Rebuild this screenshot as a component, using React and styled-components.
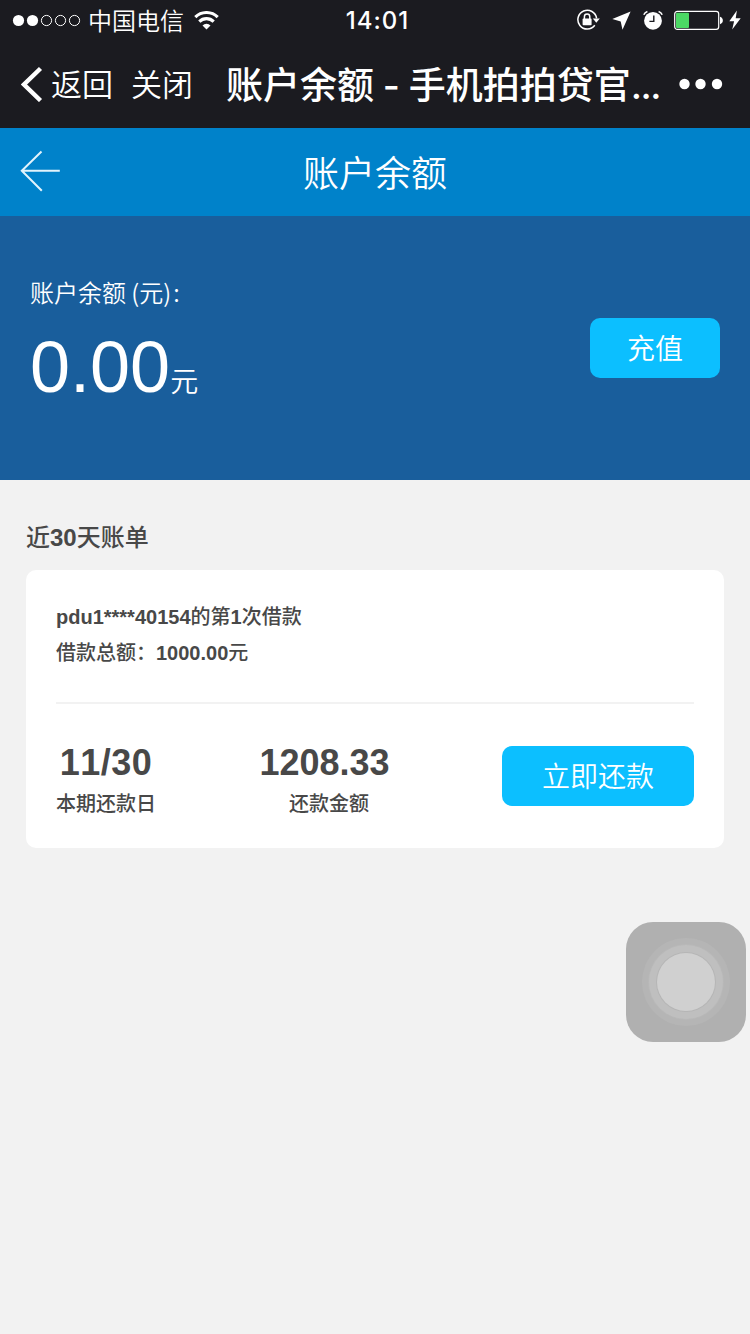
import React from "react";
import styled, { createGlobalStyle } from "styled-components";

const GlobalStyle = createGlobalStyle`
  * {
    box-sizing: border-box;
  }
  body {
    margin: 0;
    background: #f2f2f2;
    color: #484848;
    font-family: "Liberation Sans", "Noto Sans CJK SC", sans-serif;
  }
`;

const Page = styled.div`
  display: flex;
  flex-direction: column;
  width: 750px;
  min-height: 1334px;
  background: #f2f2f2;
`;

// Status bar
const StatusBar = styled.div`
  display: grid;
  grid-template-columns: 1fr auto 1fr;
  align-items: center;
  height: 40px;
  padding: 0 9px 0 12px;
  background: #1b1b20;
  color: #fff;
`;

const StatusLeft = styled.div`
  display: flex;
  align-items: center;
`;

const StatusRight = styled.div`
  display: flex;
  align-items: center;
  justify-content: flex-end;
`;

const Carrier = styled.span`
  margin: 0 10px 0 6px;
  font-family: "Noto Sans CJK SC", sans-serif;
  font-size: 24px;
  font-weight: 350;
  line-height: 40px;
`;

const Clock = styled.span`
  padding: 2px 0 0 2px;
  font-family: Inter, sans-serif;
  font-size: 24px;
  font-weight: 500;
  line-height: 38px;
  letter-spacing: 1px;
`;

const Icon = styled.svg`
  display: block;
  flex: none;
  margin-left: ${props => props.$gap || 0}px;
`;

// Browser navigation
const NavBar = styled.div`
  display: flex;
  align-items: center;
  height: 88px;
  padding: 0 27px 0 21px;
  background: #1b1b20;
  color: #fff;
  font-family: Inter, "Noto Sans CJK SC", sans-serif;
`;

const NavLink = styled.span`
  margin-left: ${props => props.$gap}px;
  padding-top: 2px;
  font-size: 31px;
  font-weight: 350;
  line-height: 86px;
  white-space: nowrap;
`;

const NavTitle = styled.span`
  flex: 1;
  margin-left: 33px;
  padding-top: 4px;
  font-size: 37px;
  font-weight: 500;
  line-height: 84px;
  white-space: nowrap;
  word-spacing: -1px;
`;

const Ellipsis = styled.span`
  letter-spacing: -1.5px;
`;

// Page header
const Header = styled.header`
  display: grid;
  grid-template-columns: 40px 1fr 40px;
  align-items: center;
  height: 88px;
  padding: 0 20px;
  background: #0082ca;
`;

const HeaderTitle = styled.h1`
  margin: 0;
  padding-bottom: 2px;
  color: #fff;
  font-family: "Noto Sans CJK SC", sans-serif;
  font-size: 36px;
  font-weight: 350;
  line-height: 86px;
  text-align: center;
`;

const Balance = styled.section`
  display: flex;
  align-items: center;
  justify-content: space-between;
  height: 264px;
  padding: 0 30px;
  background: #195e9c;
  color: #fff;
`;

const BalanceInfo = styled.div`
  padding-bottom: 12px;
`;

const BalanceLabel = styled.div`
  padding-bottom: 2px;
  font-family: "Noto Sans CJK SC", sans-serif;
  font-size: 24px;
  font-weight: 350;
  line-height: 34px;
`;

const Colon = styled.span`
  margin-left: 2px;
`;

const BalanceAmount = styled.div`
  display: flex;
  align-items: baseline;
  height: 84px;
  margin-top: 14px;
  font-size: 72px;
  line-height: 84px;
`;

const BalanceUnit = styled.span`
  font-family: "Noto Sans CJK SC", sans-serif;
  font-size: 28px;
  font-weight: 350;
`;

const Button = styled.button`
  width: ${props => props.$width}px;
  height: 60px;
  padding: 0 0 2px;
  border: 0;
  border-radius: 10px;
  background: #0cbfff;
  color: #fff;
  font-family: "Noto Sans CJK SC", sans-serif;
  font-size: 28px;
  font-weight: 350;
  line-height: 58px;
`;

// Bills
const Bills = styled.section`
  padding: 40px 26px;
`;

const BillsTitle = styled.h2`
  margin: 0 0 14px;
  font-size: 24px;
  font-weight: 500;
  line-height: 36px;
`;

const Card = styled.div`
  height: 278px;
  padding: 29px 30px;
  border-radius: 10px;
  background: #fff;
`;

const CardLine = styled.p`
  margin: 0;
  font-size: 20px;
  font-weight: 500;
  line-height: 36px;
`;

const Strong = styled.b`
  font-weight: 700;
`;

const CardFooter = styled.div`
  display: flex;
  align-items: flex-start;
  margin-top: 31px;
  border-top: 2px solid #f2f2f2;
`;

const Stat = styled.div`
  width: ${props => props.$width}px;
  margin-left: ${props => props.$gap || 0}px;
  padding-top: 38px;
`;

const StatValue = styled.div`
  font-size: 36px;
  font-weight: 700;
  font-kerning: none;
  line-height: 42px;
  letter-spacing: ${props => props.$spacing || 0}px;
  text-align: center;
`;

const StatLabel = styled.div`
  margin-top: 5px;
  padding-left: ${props => props.$indent || 0}px;
  font-size: 20px;
  font-weight: 500;
  line-height: 30px;
`;

const FooterAction = styled.div`
  margin: 42px 0 0 auto;
`;

// Floating home button, lies over the page
const AssistiveTouch = styled.div`
  position: fixed;
  top: 922px;
  left: 626px;
  display: flex;
  align-items: center;
  justify-content: center;
  width: 120px;
  height: 120px;
  border-radius: 27px;
  background: #b0b0b0;
`;

const Ring = styled.div`
  display: flex;
  align-items: center;
  justify-content: center;
  width: ${props => props.$size}px;
  height: ${props => props.$size}px;
  border-radius: 50%;
  background: ${props => props.$color};
  box-shadow: 0 0 0 1px ${props => props.$edge || "transparent"};
`;

const Signal = () => (
  <Icon width="70" height="14" viewBox="0 0 70 14">
    <circle cx="6.5" cy="7.5" r="5.6" fill="#fff" />
    <circle cx="20.5" cy="7.5" r="5.6" fill="#fff" />
    {[34.5, 48.5, 62.5].map(x => (
      <circle key={x} cx={x} cy="7.5" r="5.1" fill="none" stroke="#fff" />
    ))}
  </Icon>
);

const Wifi = () => (
  <Icon width="25" height="19" viewBox="0 0 25 19" fill="none" stroke="#fff">
    <path d="M1.3 6.2a15.8 15.8 0 0 1 22.4 0" strokeWidth="3.1" />
    <path d="M5.3 10.6a10.2 10.2 0 0 1 14.4 0" strokeWidth="3.1" />
    <path d="M12.5 18.4l-4-4a5.6 5.6 0 0 1 8 0z" fill="#fff" stroke="none" />
  </Icon>
);

const RotationLock = () => (
  <Icon width="24" height="22" viewBox="0 0 24 22">
    <path
      d="M20.6 9.4A9.4 9.4 0 1 0 18.8 16.3"
      fill="none"
      stroke="#fff"
      strokeWidth="1.5"
    />
    <path d="M16.8 9.6h7l-3.5 4.2z" fill="#fff" />
    <rect x="6.6" y="9.6" width="9" height="6.6" rx="0.8" fill="#fff" />
    <path
      d="M8.4 10V7.8a2.7 2.7 0 0 1 5.4 0V10"
      fill="none"
      stroke="#fff"
      strokeWidth="1.5"
    />
  </Icon>
);

const Location = () => (
  <Icon $gap={12} width="19" height="19" viewBox="0 0 19 19">
    <path d="M18.6 0.5L0.3 8l8.4 2.4 1.8 8.300z" fill="#fff" />
  </Icon>
);

const Alarm = () => (
  <Icon $gap={12} width="20" height="20" viewBox="0 0 20 20">
    <circle cx="10" cy="10.8" r="8.9" fill="#fff" />
    <path
      d="M0.8 4.8A6 6 0 0 1 4.4 1.5M19.2 4.8A6 6 0 0 0 15.6 1.5"
      fill="none"
      stroke="#fff"
      strokeWidth="1.6"
    />
    <path
      d="M10.8 5.4v6H6.4"
      fill="none"
      stroke="#1b1b20"
      strokeWidth="1.4"
    />
  </Icon>
);

const Battery = () => (
  <Icon $gap={11} width="50" height="20" viewBox="0 0 50 20">
    <rect
      x="0.7"
      y="1.4"
      width="44"
      height="18"
      rx="2.6"
      fill="none"
      stroke="#fff"
      strokeWidth="1.2"
    />
    <rect x="2" y="2.8" width="13" height="15.2" rx="1" fill="#4cd964" />
    <path d="M46 6.8c3.8 1 3.8 6.4 0 7.4z" fill="#fff" />
  </Icon>
);

const Bolt = () => (
  <Icon $gap={5} width="12" height="20" viewBox="0 0 12 20">
    <path d="M7.9 0.6L0.3 11.2h4.8L3.2 19.6 11.7 8.2H6.7z" fill="#fff" />
  </Icon>
);

const App = () => (
  <>
    <GlobalStyle />
    <Page>
      <StatusBar>
        <StatusLeft>
          <Signal />
          <Carrier>中国电信</Carrier>
          <Wifi />
        </StatusLeft>
        <Clock>14:01</Clock>
        <StatusRight>
          <RotationLock />
          <Location />
          <Alarm />
          <Battery />
          <Bolt />
        </StatusRight>
      </StatusBar>
      <NavBar>
        <Icon width="22" height="36" viewBox="0 0 22 36">
          <path
            d="M19.5 2.5L3 18.5l16.5 16"
            fill="none"
            stroke="#fff"
            strokeWidth="4.4"
          />
        </Icon>
        <NavLink $gap={8}>返回</NavLink>
        <NavLink $gap={18}>关闭</NavLink>
        <NavTitle>
          账户余额 - 手机拍拍贷官<Ellipsis>...</Ellipsis>
        </NavTitle>
        <Icon width="44" height="12" viewBox="0 0 44 12" fill="#fff">
          <circle cx="5.5" cy="6" r="5.2" />
          <circle cx="21.5" cy="6" r="5.2" />
          <circle cx="38" cy="6" r="5.2" />
        </Icon>
      </NavBar>
      <Header>
        <Icon width="40" height="44" viewBox="0 0 40 44">
          <path
            d="M21.5 1.5L1.8 20.7l20 20M1.8 20.7h38"
            fill="none"
            stroke="#e2f3fc"
            strokeWidth="2"
          />
        </Icon>
        <HeaderTitle>账户余额</HeaderTitle>
      </Header>
      <Balance>
        <BalanceInfo>
          <BalanceLabel>
            账户余额 (元)<Colon>:</Colon>
          </BalanceLabel>
          <BalanceAmount>
            0.00<BalanceUnit>元</BalanceUnit>
          </BalanceAmount>
        </BalanceInfo>
        <Button $width={130}>充值</Button>
      </Balance>
      <Bills>
        <BillsTitle>
          近<Strong>30</Strong>天账单
        </BillsTitle>
        <Card>
          <CardLine>
            <Strong>pdu1****40154</Strong>的第<Strong>1</Strong>次借款
          </CardLine>
          <CardLine>
            借款总额：<Strong>1000.00</Strong>元
          </CardLine>
          <CardFooter>
            <Stat $width={100}>
              <StatValue $spacing={0.5}>11/30</StatValue>
              <StatLabel>本期还款日</StatLabel>
            </Stat>
            <Stat $gap={103} $width={131}>
              <StatValue>1208.33</StatValue>
              <StatLabel $indent={30}>还款金额</StatLabel>
            </Stat>
            <FooterAction>
              <Button $width={192}>立即还款</Button>
            </FooterAction>
          </CardFooter>
        </Card>
      </Bills>
    </Page>
    <AssistiveTouch>
      <Ring $size={88} $color="#b5b5b5">
        <Ring $size={74} $color="#bfbfbf" $edge="#b8b8b8">
          <Ring $size={58} $color="#d0d0d0" $edge="#b6b6b6" />
        </Ring>
      </Ring>
    </AssistiveTouch>
  </>
);

export default App;
